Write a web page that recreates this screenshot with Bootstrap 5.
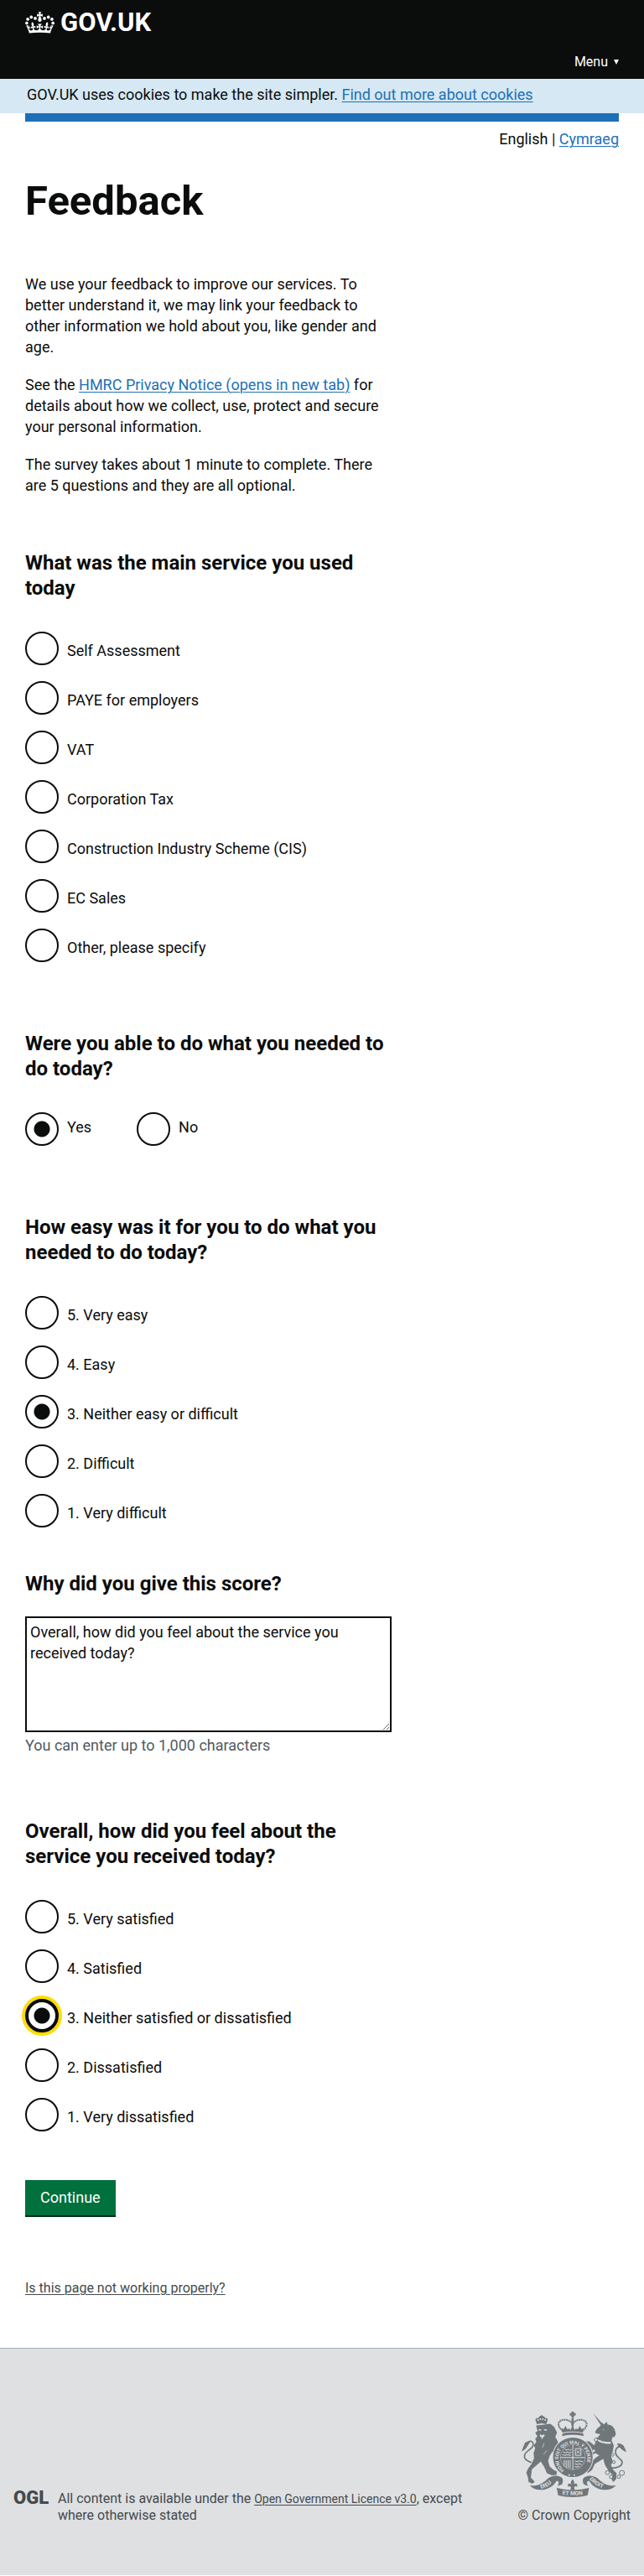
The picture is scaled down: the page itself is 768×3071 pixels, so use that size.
<!DOCTYPE html>
<html lang="en">
<head>
<meta charset="utf-8">
<meta name="viewport" content="width=device-width, initial-scale=1">
<title>Feedback - GOV.UK</title>
<link href="https://cdn.jsdelivr.net/npm/bootstrap@5.3.0/dist/css/bootstrap.min.css" rel="stylesheet">
<style>
  :root { --ink: #0b0c0c; --blue: #1d70b8; --grey: #505a5f; --footer-ink: #454a4d; }
  body { font-family: Roboto, "Liberation Sans", sans-serif; font-size: 18px; line-height: 25px; color: var(--ink); background: #fff; }
  a { color: var(--blue); text-decoration: underline; text-decoration-thickness: 1px; text-underline-offset: 2px; }
  .gutter { padding-left: 30px; padding-right: 30px; }
  .site-header { background: var(--ink); color: #fff; padding-top: 12px; padding-bottom: 10px; }
  .logo-link { gap: 7px; color: #fff; font-size: 31px; font-weight: 700; line-height: 30px; }
  .menu-btn { font-size: 16px; line-height: 20px; color: #fff; background: none; border: 0; margin-top: 22px; gap: 7px; }
  .cookie-bar { background: #d5e8f3; padding-top: 6px; padding-bottom: 10px; }
  .cookie-bar p { padding-left: 2px; }
  .blue-rule { height: 10px; background: var(--blue); }
  .page-title { font-size: 49px; line-height: 50px; font-weight: 700; margin: 37px 0 61px; }
  .survey { --bs-gutter-x: 30px; }
  .survey-body { padding-right: 40px; }
  .intro { margin-bottom: 65px; }
  .intro p { margin-bottom: 20px; }
  .intro p:last-child { margin-bottom: 0; }
  .question { margin-bottom: 82px; }
  .question legend, .question-label { float: none; display: block; font-size: 24px; line-height: 30px; font-weight: 700; margin-bottom: 37px; }
  .question.close-next { margin-bottom: 52px; }
  .question.reason { margin-bottom: 75px; }
  .question.final { margin-bottom: 58px; }
  .question-label { margin-bottom: 24px; }
  .stack { display: grid; gap: 19px; }
  .choice { display: flex; gap: 10px; }
  .choice label { padding-top: 10px; padding-bottom: 5px; }
  .choice-row .choice label { padding-top: 5px; padding-bottom: 10px; }
  .choice-row { gap: 54px; }
  .choice input { appearance: none; flex: none; width: 40px; height: 40px; margin: 0; border: 2px solid var(--ink); border-radius: 50%; background: #fff; }
  .choice input:checked { background: radial-gradient(circle, var(--ink) 0 9px, #fff 10px); }
  .choice input:focus, .choice input.focused { border-width: 4px; outline: 0; box-shadow: 0 0 0 4px #fd0; }
  .reason-box { display: block; width: 100%; height: 138px; border: 2px solid var(--ink); border-radius: 0; padding: 4px; color: var(--ink); font-size: 18px; line-height: 25px; }
  .hint { color: var(--grey); margin-top: 3px; }
  .btn-continue { background: #00703c; color: #fff; border: 0; border-bottom: 2px solid #002d18; border-radius: 0; padding: 8px 18px; font-size: 18px; line-height: 26px; }
  .btn-continue:hover { background: #005a30; color: #fff; }
  .problem { margin-top: 75px; margin-bottom: 61px; font-size: 16px; line-height: 20px; }
  .problem a, .site-footer a { color: var(--footer-ink); }
  .site-footer { background: #dee0e2; border-top: 1px solid #a1acb2; color: var(--footer-ink); padding: 75px 16px 61px; font-size: 16px; line-height: 20px; }
  .licence { gap: 10px; max-width: 570px; }
  .licence p { max-width: 510px; }
  .licence p a { font-size: 14px; }
  .ogl { min-width: 43px; font-size: 22px; font-weight: 900; line-height: 18px; }
  .arms { gap: 12px; }
</style>
</head>
<body>
<header class="site-header gutter">
  <div class="d-flex">
    <a href="#" class="logo-link d-flex align-items-center text-decoration-none">
      <svg width="35" height="26" viewBox="0 0 132 97" fill="#fff" aria-hidden="true"><path d="M25 30.2c3.5 1.5 7.7-.2 9.1-3.7 1.5-3.6-.2-7.8-3.9-9.2-3.6-1.4-7.6.3-9.1 3.9-1.4 3.5.3 7.5 3.9 9zM9 39.5c3.6 1.5 7.8-.2 9.2-3.7 1.5-3.6-.2-7.8-3.9-9.1-3.6-1.5-7.6.2-9.1 3.8-1.4 3.5.3 7.5 3.8 9zM4.4 57.2c3.5 1.5 7.7-.2 9.1-3.8 1.5-3.6-.2-7.7-3.9-9.1-3.5-1.5-7.6.3-9.1 3.8-1.4 3.5.3 7.6 3.9 9.1zm38.3-21.4c3.5 1.5 7.7-.2 9.1-3.8 1.5-3.6-.2-7.7-3.9-9.1-3.6-1.5-7.6.3-9.1 3.8-1.3 3.6.4 7.7 3.9 9.1zm64.4-5.6c-3.6 1.5-7.8-.2-9.1-3.7-1.5-3.6.2-7.8 3.8-9.2 3.6-1.4 7.7.3 9.2 3.9 1.3 3.5-.4 7.5-3.9 9zm15.9 9.3c-3.6 1.5-7.7-.2-9.1-3.7-1.5-3.6.2-7.8 3.7-9.1 3.6-1.5 7.7.2 9.2 3.8 1.5 3.5-.3 7.5-3.8 9zm4.7 17.7c-3.6 1.5-7.8-.2-9.2-3.8-1.5-3.6.2-7.7 3.9-9.1 3.6-1.5 7.7.3 9.2 3.8 1.3 3.5-.4 7.6-3.9 9.1zM89.3 35.8c-3.6 1.5-7.8-.2-9.2-3.8-1.4-3.6.2-7.7 3.9-9.1 3.6-1.5 7.7.3 9.2 3.8 1.4 3.6-.3 7.7-3.9 9.1zM69.7 17.7l8.9 4.7V9.3l-8.9 2.8c-.2-.3-.5-.6-.9-.9L72.4 0H59.6l3.5 11.2c-.3.3-.6.5-.9.9l-8.8-2.8v13.1l8.8-4.7c.3.3.6.7.9.9l-5 15.4v.1c-.2.8-.4 1.6-.4 2.4 0 4.1 3.1 7.5 7 8.1h.2c.3 0 .7.1 1 .1.4 0 .7 0 1-.1h.2c4-.6 7.1-4.1 7.1-8.1 0-.8-.1-1.7-.4-2.4V34l-5.1-15.4c.4-.2.7-.6 1-.9zM66 92.8c16.9 0 32.8 1.1 47.1 3.2 4-16.9 8.9-26.7 14-33.5l-9.6-3.4c1 4.9 1.1 7.2 0 10.2-1.5-1.4-3-4.3-4.2-8.7L108.6 76c2.8-2 5-3.2 7.5-3.3-4.4 9.4-10 11.9-13.6 11.2-4.3-.8-6.3-4.6-5.6-7.9 1-4.7 5.7-5.9 8-.5 4.3-8.7-3-11.4-7.6-8.8 7.1-7.2 7.9-13.5 2.1-21.1-8 6.1-8.1 12.3-4.5 20.8-4.7-5.4-12.1-2.5-9.5 6.2 3.4-5.2 7.9-2 7.2 3.1-.6 4.3-6.4 7.8-13.5 7.2-10.3-.9-10.9-8-11.2-13.8 2.5-.5 7.1 1.8 11 7.3L80.2 60c-4.1 4.4-8 5.3-12.3 5.4 1.4-4.4 8-11.6 8-11.6H55.5s6.4 7.2 7.9 11.6c-4.2-.1-8-1-12.3-5.4l1.4 16.4c3.9-5.5 8.5-7.7 10.9-7.3-.3 5.8-.9 12.8-11.1 13.8-7.2.6-12.9-2.9-13.5-7.2-.7-5 3.8-8.3 7.1-3.1 2.7-8.7-4.6-11.6-9.4-6.2 3.7-8.5 3.6-14.7-4.6-20.8-5.8 7.6-5 13.9 2.2 21.1-4.7-2.6-11.9.1-7.7 8.8 2.3-5.5 7.1-4.2 8.1.5.7 3.3-1.3 7.1-5.7 7.9-3.5.7-9-1.8-13.5-11.2 2.5.1 4.7 1.3 7.5 3.3l-4.7-15.4c-1.2 4.4-2.7 7.2-4.3 8.7-1.1-3-.9-5.3 0-10.2l-9.5 3.4c5 6.9 9.9 16.7 14 33.5 14.8-2.1 30.8-3.2 47.7-3.2z"/></svg>
      <span>GOV.UK</span>
    </a>
  </div>
  <div class="d-flex justify-content-end">
    <button type="button" class="menu-btn d-flex align-items-center p-0">Menu
      <svg width="6" height="6" viewBox="0 0 6 6" fill="#fff" aria-hidden="true"><path d="M0 0h6L3 6z"/></svg>
    </button>
  </div>
</header>

<div class="cookie-bar gutter">
  <p class="mb-0">GOV.UK uses cookies to make the site simpler. <a href="#">Find out more about cookies</a></p>
</div>

<div class="gutter">
  <div class="blue-rule"></div>
  <nav class="text-end pt-2" aria-label="Language">English | <a href="#" lang="cy">Cymraeg</a></nav>

  <main>
    <h1 class="page-title">Feedback</h1>
    <div class="row survey">
      <form class="col-12 col-md-8 survey-body">
        <div class="intro">
          <p>We use your feedback to improve our services. To better understand it, we may link your feedback to other information we hold about you, like gender and age.</p>
          <p>See the <a href="#">HMRC Privacy Notice (opens in new tab)</a> for details about how we collect, use, protect and secure your personal information.</p>
          <p>The survey takes about 1 minute to complete. There are&nbsp;5 questions and they are all optional.</p>
        </div>

        <fieldset class="question">
          <legend>What was the main service you used today</legend>
          <div class="stack">
            <div class="choice"><input type="radio" name="service" id="s1"><label for="s1">Self Assessment</label></div>
            <div class="choice"><input type="radio" name="service" id="s2"><label for="s2">PAYE for employers</label></div>
            <div class="choice"><input type="radio" name="service" id="s3"><label for="s3">VAT</label></div>
            <div class="choice"><input type="radio" name="service" id="s4"><label for="s4">Corporation Tax</label></div>
            <div class="choice"><input type="radio" name="service" id="s5"><label for="s5">Construction Industry Scheme (CIS)</label></div>
            <div class="choice"><input type="radio" name="service" id="s6"><label for="s6">EC Sales</label></div>
            <div class="choice"><input type="radio" name="service" id="s7"><label for="s7">Other, please specify</label></div>
          </div>
        </fieldset>

        <fieldset class="question">
          <legend>Were you able to do what you needed to do today?</legend>
          <div class="choice-row d-flex">
            <div class="choice"><input type="radio" name="able" id="a1" checked><label for="a1">Yes</label></div>
            <div class="choice"><input type="radio" name="able" id="a2"><label for="a2">No</label></div>
          </div>
        </fieldset>

        <fieldset class="question close-next">
          <legend>How easy was it for you to do what you needed to do today?</legend>
          <div class="stack">
            <div class="choice"><input type="radio" name="ease" id="e5"><label for="e5">5. Very easy</label></div>
            <div class="choice"><input type="radio" name="ease" id="e4"><label for="e4">4. Easy</label></div>
            <div class="choice"><input type="radio" name="ease" id="e3" checked><label for="e3">3. Neither easy or difficult</label></div>
            <div class="choice"><input type="radio" name="ease" id="e2"><label for="e2">2. Difficult</label></div>
            <div class="choice"><input type="radio" name="ease" id="e1"><label for="e1">1. Very difficult</label></div>
          </div>
        </fieldset>

        <div class="question reason">
          <label class="question-label" for="why">Why did you give this score?</label>
          <textarea class="reason-box" id="why" aria-describedby="why-hint">Overall, how did you feel about the service you received today?</textarea>
          <div class="hint" id="why-hint">You can enter up to 1,000 characters</div>
        </div>

        <fieldset class="question final">
          <legend>Overall, how did you feel about the service you received today?</legend>
          <div class="stack">
            <div class="choice"><input type="radio" name="feel" id="f5"><label for="f5">5. Very satisfied</label></div>
            <div class="choice"><input type="radio" name="feel" id="f4"><label for="f4">4. Satisfied</label></div>
            <div class="choice"><input type="radio" name="feel" id="f3" class="focused" checked><label for="f3">3. Neither satisfied or dissatisfied</label></div>
            <div class="choice"><input type="radio" name="feel" id="f2"><label for="f2">2. Dissatisfied</label></div>
            <div class="choice"><input type="radio" name="feel" id="f1"><label for="f1">1. Very dissatisfied</label></div>
          </div>
        </fieldset>

        <button type="submit" class="btn btn-continue d-block">Continue</button>
        <div class="problem"><a href="#">Is this page not working properly?</a></div>
      </form>
    </div>
  </main>
</div>

<footer class="site-footer d-flex justify-content-between align-items-end">
  <div class="licence d-flex align-items-start">
    <span class="ogl">OGL</span>
    <p class="mb-0">All content is available under the <a href="#">Open Government Licence v3.0</a>, except where otherwise stated</p>
  </div>
  <div class="arms d-flex flex-column align-items-center text-nowrap">
    <svg width="125" height="102" viewBox="69 47 376 307" fill="#6f777b" role="img" aria-label="Royal coat of arms">
      <!-- lion -->
      <path d="M124 92l-6-16 5-6 6 0 5-7 4 0 1-3h4l1 3 6 1 4 6 6 0 3 6-5 16-17-3z"/>
      <g fill="#dee0e2"><circle cx="128" cy="77" r="3"/><circle cx="136" cy="74" r="3"/><circle cx="145" cy="74" r="3"/><circle cx="154" cy="77" r="3"/></g>
      <path d="M121 97L150 94L172 91L186 102L196 122L190 138L200 156L197 168L206 186L200 202L190 200L180 190L170 206L164 224L170 244L184 256L196 262L194 274L178 276L160 268L150 246L138 226L124 238L106 254L104 270L102 284L116 298L108 306L94 300L92 284L86 266L92 252L104 236L114 214L112 196L118 178L112 168L122 156L118 144L126 136L118 124L126 116z"/>
      <path d="M104 230C84 222 74 214 82 198c10-16 34-20 28-38-2-8-12-8-16-4" fill="none" stroke="#6f777b" stroke-width="5"/>
      <path d="M69 190c4-10 6-18 10-24-2-8 12-14 22-14-4 8-8 14-12 20-2 8-12 14-20 18z"/>
      <path d="M128 112l8-2 5 3-6 3zM148 111l10-1 3 3-8 3zM136 128l6 4 8-4 2 6-6 5-3 8-4-8-5-5z" fill="#dee0e2"/>
      <path d="M150 160l-6 16M160 186l-12 14" stroke="#dee0e2" stroke-width="2" fill="none"/>
      <!-- unicorn -->
      <path d="M326 54l36 40-6 6z"/>
      <path d="M332 122L340 108L352 98L358 86L364 94L374 84L378 94C394 94 406 108 407 130L400 140L396 136L392 150L400 170L396 190L390 206L396 226L390 240L398 256L410 268L408 290L398 300L392 290L396 276L380 258L368 238L362 216L350 224L332 234L322 256L306 268L304 258L314 246L318 228L336 212L348 204L334 196L318 206L310 200L324 186L314 170L302 164L298 154L312 154L330 168L340 142L352 128L340 126z"/>
      <path d="M392 250c22 0 38-8 38-22-2-14-26-16-24-38 2-16 14-22 26-14" fill="none" stroke="#6f777b" stroke-width="5"/>
      <path d="M412 162c14-2 24 6 26 14 4 6 6 12 6 16-8-4-16-8-20-14-6-4-10-10-12-16z"/>
      <path d="M341 147c12 10 26 14 48 12" fill="none" stroke="#dee0e2" stroke-width="7"/>
      <path d="M340 140l8 9 4-5 5 9 6-6 5 7 6-7 6 6 6-8" fill="none" stroke="#6f777b" stroke-width="3"/>
      <g fill="#dee0e2" stroke="#6f777b" stroke-width="3"><circle cx="377" cy="266" r="7"/><circle cx="390" cy="281" r="6"/><circle cx="418" cy="281" r="6"/><circle cx="429" cy="267" r="9"/><circle cx="400" cy="228" r="5"/><circle cx="396" cy="202" r="5"/><circle cx="336" cy="148" r="6"/><circle cx="328" cy="188" r="6"/></g>
      <circle cx="362" cy="112" r="2" fill="#dee0e2"/>
      <!-- garter and shield -->
      <circle cx="253" cy="211" r="74" fill="#dee0e2"/>
      <circle cx="253" cy="211" r="58" fill="none" stroke="#6f777b" stroke-width="26"/>
      <path id="garter" d="M222 257A52 52 0 1 1 284 257" fill="none"/>
      <text font-family="Roboto, sans-serif" font-size="17" font-weight="700" fill="#dee0e2" aria-hidden="true"><textPath href="#garter">HONI SOIT QUI MAL Y PENSE</textPath></text>
      <circle cx="240" cy="274" r="3" fill="#dee0e2"/><circle cx="258" cy="275" r="3" fill="#dee0e2"/>
      <circle cx="253" cy="211" r="44"/>
      <path d="M253 167v88M209 212h88" stroke="#dee0e2" stroke-width="3"/>
      <g fill="none" stroke="#dee0e2" stroke-width="3"><path d="M224 182l8 3 6-3 4 4 6-3M218 192l8 3 8-3 6 4 8-3M216 202l8 2 8-2 14 2M260 224l8 3 8-3 14 3M260 234l8 3 8-3 8 3M260 244l8 2 8-3"/><path d="M262 180h20v24h-20zM266 186l12 12M278 186l-12 12"/><path d="M222 221v20M229 221v26M236 221v28M243 221v30"/></g>
      <!-- crown -->
      <path d="M248 47h9v5h6v9h-6v8h-9v-8h-6v-9h6z"/>
      <path d="M217 116c-24-18-18-38 4-40 14 0 26 6 31 16 5-10 17-16 31-16 22 2 28 22 4 40" fill="none" stroke="#6f777b" stroke-width="6" stroke-dasharray="6 2"/>
      <path d="M248 70h8v30h-8zM215 122l-2-16 7 4 6-12 7 12 8-2 3 6 8-18 8 18 3-6 8 2 7-12 6 12 7-4-2 16c-24-5-50-5-74 0z"/>
      <path d="M215 126c24-6 52-6 76 0v9c-24-6-52-6-76 0z"/>
      <!-- motto ribbon -->
      <path d="M98 312c26 4 46-6 62-22 16-14 36-16 50-8 10 6 8 16 4 26l-16 6c6-10 6-20-4-18-10 20-34 32-58 32-16 0-28-6-38-16z"/>
      <path d="M408 312c-26 4-46-6-62-22-16-14-36-16-50-8-10 6-8 16-4 26l16 6c-6-10-6-20 4-18 10 20 34 32 58 32 16 0 28-6 38-16z"/>
      <path d="M195 320c36 11 80 11 116 0l-5 27c-34 9-72 9-106 0z"/>
      <path id="ribbon-left" d="M139 324q30-8 52-34" fill="none"/>
      <path id="ribbon-mid" d="M215 344q42 6 86 0" fill="none"/>
      <path id="ribbon-right" d="M312 290q22 26 62 36" fill="none"/>
      <g font-family="Roboto, sans-serif" font-size="20" font-weight="700" fill="#dee0e2" aria-hidden="true">
        <text><textPath href="#ribbon-left">DIEU</textPath></text>
        <text><textPath href="#ribbon-mid">ET MON</textPath></text>
        <text><textPath href="#ribbon-right">DROIT</textPath></text>
      </g>
      <path d="M252 289c7 8 7 14 4 20 8-8 16-2 12 8-6-4-8-2-10 2l2 10h-16l2-10c-2-4-4-6-10-2-4-10 4-16 12-8-3-6-3-12 4-20z"/>
    </svg>
    <span>© Crown Copyright</span>
  </div>
</footer>
<script src="https://cdn.jsdelivr.net/npm/bootstrap@5.3.0/dist/js/bootstrap.bundle.min.js"></script>
</body>
</html>
